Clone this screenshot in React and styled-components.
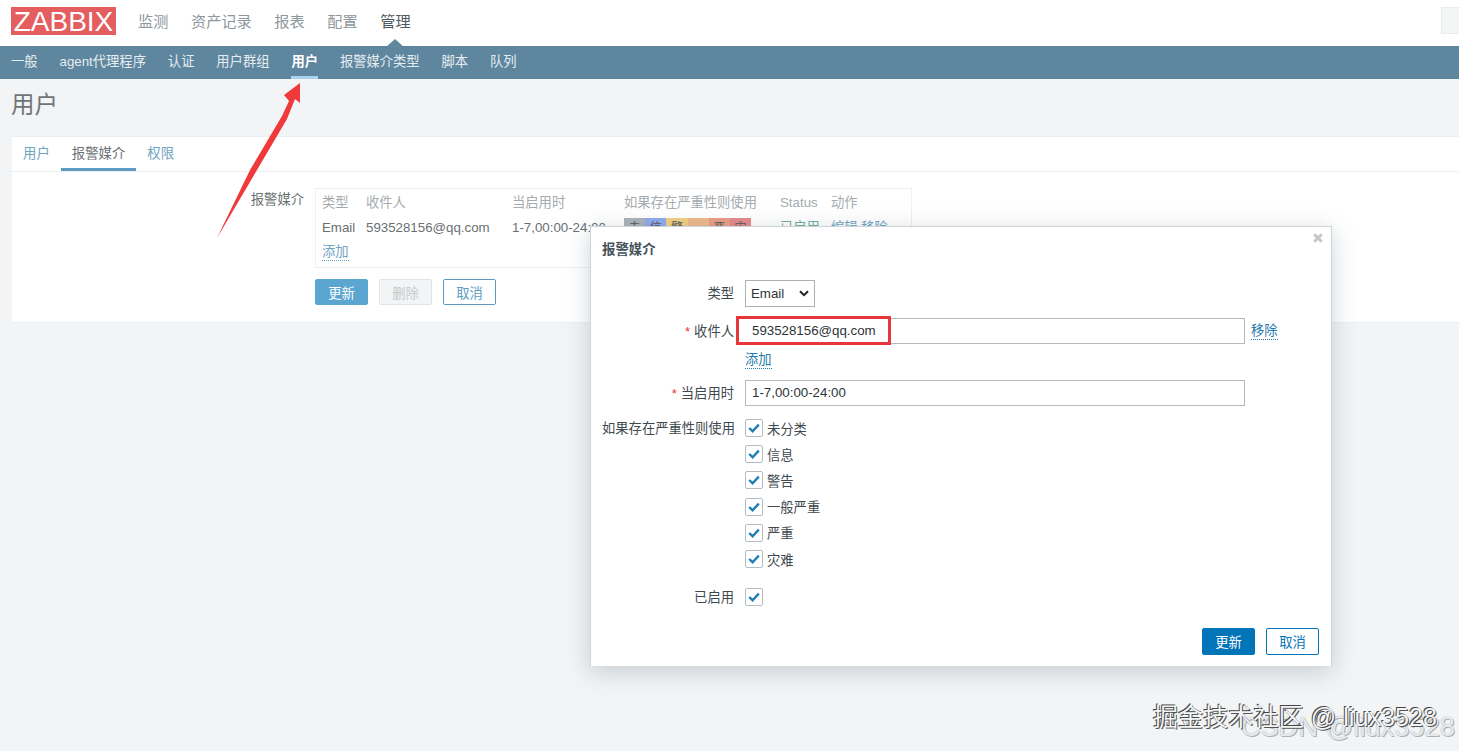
import React from 'react';
import styled, { createGlobalStyle } from 'styled-components';

const GlobalStyle = createGlobalStyle`
  html, body {
    margin: 0;
    padding: 0;
    height: 100%;
    overflow: hidden;
    background: #f2f4f6;
    font-family: "Liberation Sans", "Noto Sans CJK SC", sans-serif;
    font-size: 13.3px;
    color: #5a6670;
  }
`
const Page = styled.div`
  position: relative;
  width: 1459px;
  height: 751px;
  overflow: hidden;
`
const TopBar = styled.header`
  display: flex;
  align-items: center;
  height: 46px;
  padding: 0 0 4px 11px;
  box-sizing: border-box;
  background: #fff;
  position: relative;
`
const Logo = styled.div`
  width: 105px;
  height: 28px;
  background: #e45d5f;
  color: #fff;
  font-size: 28px;
  line-height: 29px;
  text-align: center;
  margin-right: 22px;
`
const TopLink = styled.a`
  position: relative;
  margin: -3px 22.6px 0 0;
  font-size: 15.2px;
  color: ${p => (p.$active ? '#4f5a60' : '#8e979c')};
  &::after {
    content: '';
    display: ${p => (p.$active ? 'block' : 'none')};
    position: absolute;
    left: 50%;
    bottom: -17px;
    margin-left: -10px;
    border-left: 10px solid transparent;
    border-right: 10px solid transparent;
    border-bottom: 9px solid #5f879f;
  }
`
const SearchStub = styled.div`
  position: absolute;
  right: 0;
  top: 7px;
  width: 18px;
  height: 27px;
  background: #f4f5f5;
  border: 1px solid #ececec;
  border-right: 0;
  box-sizing: border-box;
`
const SubBar = styled.nav`
  display: flex;
  height: 33px;
  padding-left: 11px;
  gap: 21.9px;
  background: #5f869f;
`
const SubLink = styled.a`
  height: 30px;
  line-height: 32px;
  font-size: 13.3px;
  color: ${p => (p.$active ? '#fff' : '#e6edf1')};
  font-weight: ${p => (p.$active ? 700 : 400)};
  border-bottom: 3px solid ${p => (p.$active ? '#a9d2ec' : 'transparent')};
`
const Title = styled.h1`
  margin: 0;
  height: 57px;
  padding: 11px 0 0 11px;
  box-sizing: border-box;
  font-size: 23.5px;
  line-height: 30px;
  font-weight: 400;
  color: #6f7477;
`
const Card = styled.section`
  margin-left: 12px;
  height: 187px;
  background: #fff;
  border-top: 1px solid #ebeef0;
  border-bottom: 1px solid #ebeef0;
  box-sizing: border-box;
`
const Tabs = styled.div`
  display: flex;
  height: 34px;
  border-bottom: 1px solid #ebeef0;
`
const Tab = styled.a`
  padding: 0 11px;
  height: 31px;
  line-height: 33px;
  font-size: 13.4px;
  color: ${p => (p.$active ? '#6b7175' : '#6fa3c2')};
  border-bottom: 3px solid ${p => (p.$active ? '#5d9cc0' : 'transparent')};
`
const CardBody = styled.div`
  display: flex;
  padding-top: 16px;
`
const FieldLabel = styled.div`
  width: 303px;
  padding-right: 11px;
  box-sizing: border-box;
  text-align: right;
  line-height: 24px;
  color: #6a6f72;
`
const FieldValue = styled.div`
  width: 597px;
`
const MediaTable = styled.div`
  display: grid;
  grid-template-columns: 44px 146px 112px 156px 51px 1fr;
  grid-auto-rows: 25px;
  height: 80px;
  box-sizing: border-box;
  padding: 1px 0 0 6px;
  border: 1px solid #eef0f2;
  line-height: 25px;
  color: #6a6f72;
`
const HeadCell = styled.div`
  color: #a5abaf;
`
const BodyCell = styled.div`
  white-space: nowrap;
  color: ${p => p.$color || '#6a6f72'};
`
const AddCell = styled.div`
  padding-top: 3px;
  line-height: 17px;
`
const Severity = styled.div`
  display: flex;
  width: 127px;
  height: 24px;
  margin-top: 3px;
`
const SeverityCell = styled.span`
  flex: 1;
  text-align: center;
  line-height: 21px;
  background: ${p => p.$color};
  color: #555;
  font-size: 12px;
`
const DashedLink = styled.a`
  display: inline-block;
  line-height: 17px;
  border-bottom: 1px dotted currentColor;
  color: ${p => p.$color || '#1f7bab'};
`
const Actions = styled.div`
  display: flex;
  gap: 11px;
  margin-top: 11px;
`
const Btn = styled.button`
  width: 53px;
  height: ${p => p.$h || 26}px;
  padding: 0;
  border-radius: 2px;
  font: inherit;
  border: 1px solid ${p => p.$border};
  background: ${p => p.$bg};
  color: ${p => p.$color};
`
const Modal = styled.div`
  position: absolute;
  left: 590px;
  top: 226px;
  width: 742px;
  height: 440px;
  box-sizing: border-box;
  padding: 13px 12px 0 11px;
  background: #fff;
  border: 1px solid #cdd4d9;
  border-bottom: 0;
  box-shadow: 0 5px 22px rgba(80, 100, 115, 0.28);
  color: #3f4a50;
`
const ModalTitle = styled.h4`
  margin: 0 0 20px;
  font-size: 13.4px;
  line-height: 20px;
  font-weight: 700;
  color: #45525a;
`
const Close = styled.svg`
  position: absolute;
  right: 8px;
  top: 6px;
`
const FormGrid = styled.div`
  display: grid;
  grid-template-columns: 132px 1fr;
  column-gap: 11px;
`
const FormLabel = styled.div`
  text-align: right;
  line-height: ${p => p.$lh || 27}px;
  height: ${p => p.$h || 27}px;
  margin-bottom: ${p => p.$mb || 0}px;
  white-space: nowrap;
`
const FormCell = styled.div`
  min-height: ${p => p.$h || 27}px;
  margin-bottom: ${p => p.$mb || 0}px;
  padding-top: ${p => p.$pt || 0}px;
  box-sizing: border-box;
`
const Req = styled.span`
  color: #e33734;
  margin-right: 4px;
`
const SelectBox = styled.div`
  display: flex;
  align-items: center;
  justify-content: space-between;
  width: 70px;
  height: 27px;
  box-sizing: border-box;
  padding: 0 5px;
  border: 1px solid #a9b0b5;
  color: #2c3438;
`
const TextBox = styled.div`
  width: 500px;
  height: 26px;
  box-sizing: border-box;
  padding: 0 6px;
  line-height: 24px;
  border: 1px solid #b3b9bd;
  border-left-color: ${p => (p.$marked ? 'transparent' : '#b3b9bd')};
  color: #2c3438;
`
const InputRow = styled.div`
  display: flex;
  align-items: center;
  gap: 6px;
`
const CheckRow = styled.div`
  display: flex;
  align-items: center;
  gap: 4px;
  height: 26.2px;
`
const CheckBox = styled.span`
  display: flex;
  align-items: center;
  justify-content: center;
  width: 18px;
  height: 18px;
  box-sizing: border-box;
  border: 1px solid #b3bcc2;
  border-radius: 2px;
  background: #fff;
`
const ModalFooter = styled.div`
  position: absolute;
  right: 12px;
  bottom: 11px;
  display: flex;
  gap: 11px;
`
const Highlight = styled.div`
  position: absolute;
  left: 736px;
  top: 316px;
  width: 155px;
  height: 29px;
  box-sizing: border-box;
  border: 3px solid #e7373a;
`
const Arrow = styled.svg`
  position: absolute;
  left: 210px;
  top: 78px;
`
const WatermarkBack = styled.div`
  position: absolute;
  right: 4px;
  top: 713px;
  font-size: 27.3px;
  line-height: 28px;
  white-space: nowrap;
  color: rgba(255, 255, 255, 0.8);
  text-shadow: 0 0 1px #8f969a, 1px 1px 0 #b0b5b8;
`
const Watermark = styled.div`
  position: absolute;
  left: 1153px;
  top: 702px;
  font-size: 25px;
  line-height: 30px;
  letter-spacing: 0.1px;
  white-space: nowrap;
  color: #f4f5f6;
  text-shadow: -1px -1px 0 #444, 1px 1px 0 #555;
`

const topLinks = ['监测', '资产记录', '报表', '配置', '管理'];
const subLinks = ['一般', 'agent代理程序', '认证', '用户群组', '用户', '报警媒介类型', '脚本', '队列'];
const severities = [
  ['未', '#a9b3b8'],
  ['信', '#8eaaf0'],
  ['警', '#f3cf84'],
  ['', '#f0b98c'],
  ['严', '#eb9c86'],
  ['灾', '#e58a8a'],
];
const checks = ['未分类', '信息', '警告', '一般严重', '严重', '灾难'];

const Tick = () => (
  <svg width="12" height="10" viewBox="0 0 12 10">
    <path d="M1.2 5 L4.6 8.2 L10.8 1.6" fill="none" stroke="#1f7fb5" strokeWidth="2.4" />
  </svg>
);

export default function App() {
  return (
    <Page>
      <GlobalStyle />
      <TopBar>
        <Logo>ZABBIX</Logo>
        {topLinks.map((t, i) => <TopLink key={t} $active={i === 4}>{t}</TopLink>)}
        <SearchStub />
      </TopBar>
      <SubBar>
        {subLinks.map((t, i) => <SubLink key={t} $active={i === 4}>{t}</SubLink>)}
      </SubBar>
      <Title>用户</Title>
      <Card>
        <Tabs>
          <Tab>用户</Tab>
          <Tab $active>报警媒介</Tab>
          <Tab>权限</Tab>
        </Tabs>
        <CardBody>
          <FieldLabel>报警媒介</FieldLabel>
          <FieldValue>
            <MediaTable>
              <HeadCell>类型</HeadCell>
              <HeadCell>收件人</HeadCell>
              <HeadCell>当启用时</HeadCell>
              <HeadCell>如果存在严重性则使用</HeadCell>
              <HeadCell>Status</HeadCell>
              <HeadCell>动作</HeadCell>
              <BodyCell>Email</BodyCell>
              <BodyCell>593528156@qq.com</BodyCell>
              <BodyCell>1-7,00:00-24:00</BodyCell>
              <Severity>
                {severities.map(([t, c], i) => <SeverityCell key={i} $color={c}>{t}</SeverityCell>)}
              </Severity>
              <BodyCell $color="#6fae9a">已启用</BodyCell>
              <BodyCell $color="#6fa3c2">编辑 移除</BodyCell>
              <AddCell><DashedLink $color="#6fa3c2">添加</DashedLink></AddCell>
            </MediaTable>
            <Actions>
              <Btn $bg="#5ba6d0" $border="#5ba6d0" $color="#fff">更新</Btn>
              <Btn $bg="#f2f4f5" $border="#e2e5e7" $color="#c4c9cc">删除</Btn>
              <Btn $bg="#fff" $border="#5d9cc0" $color="#5d9cc0">取消</Btn>
            </Actions>
          </FieldValue>
        </CardBody>
      </Card>

      <Arrow width="100" height="170" viewBox="0 0 100 170">
        <path d="M7 160 L40 92 L72 38 L79 23 L74 17 L90 5 L90 25 L85 21 L77 41 L47 92 Z" fill="#f0393b" />
      </Arrow>

      <Modal>
        <ModalTitle>报警媒介</ModalTitle>
        <Close width="10" height="10" viewBox="0 0 10 10">
          <path d="M1.2 1.2 L8.8 8.8 M8.8 1.2 L1.2 8.8" stroke="#c4c8cb" strokeWidth="3" />
        </Close>
        <FormGrid>
          <FormLabel $mb={11}>类型</FormLabel>
          <FormCell $mb={11}>
            <SelectBox>
              Email
              <svg width="10" height="7" viewBox="0 0 10 7">
                <path d="M1 1.2 L5 5.2 L9 1.2" fill="none" stroke="#222" strokeWidth="2" />
              </svg>
            </SelectBox>
          </FormCell>

          <FormLabel $h={26}><Req>*</Req>收件人</FormLabel>
          <FormCell $h={26}>
            <InputRow>
              <TextBox $marked>593528156@qq.com</TextBox>
              <DashedLink>移除</DashedLink>
            </InputRow>
          </FormCell>

          <div />
          <FormCell $h={36} $pt={7}>
            <DashedLink>添加</DashedLink>
          </FormCell>

          <FormLabel $h={26} $mb={9}><Req>*</Req>当启用时</FormLabel>
          <FormCell $h={26} $mb={9}><TextBox>1-7,00:00-24:00</TextBox></FormCell>

          <FormLabel $lh={28}>如果存在严重性则使用</FormLabel>
          <FormCell $mb={12}>
            {checks.map(c => (
              <CheckRow key={c}><CheckBox><Tick /></CheckBox>{c}</CheckRow>
            ))}
          </FormCell>

          <FormLabel>已启用</FormLabel>
          <FormCell><CheckRow><CheckBox><Tick /></CheckBox></CheckRow></FormCell>
        </FormGrid>
        <ModalFooter>
          <Btn $h={27} $bg="#0275b8" $border="#0275b8" $color="#fff">更新</Btn>
          <Btn $h={27} $bg="#fff" $border="#0275b8" $color="#0275b8">取消</Btn>
        </ModalFooter>
      </Modal>
      <Highlight />

      <WatermarkBack>CSDN @liux3528</WatermarkBack>
      <Watermark>掘金技术社区 @ liux3528</Watermark>
    </Page>
  );
}
